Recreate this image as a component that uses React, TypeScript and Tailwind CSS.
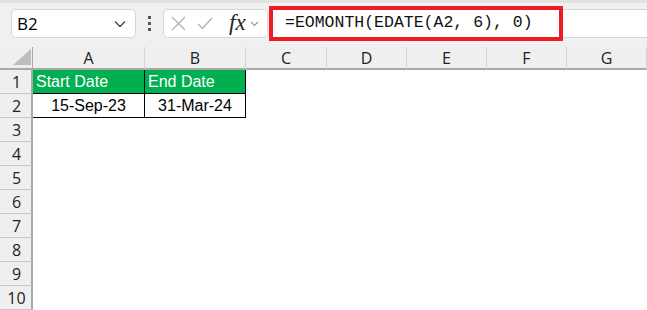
import React from 'react';

const COLS = ['A', 'B', 'C', 'D', 'E', 'F', 'G'];
const WIDTHS = [112, 101, 81, 80, 80, 80, 80];
const ROWS = [1, 2, 3, 4, 5, 6, 7, 8, 9, 10];

const ui = { fontFamily: '"Open Sans", "Noto Sans", sans-serif' };
const cellFont = { fontFamily: '"Liberation Sans", Arial, sans-serif' };

function Toolbar() {
  return (
    <div className="relative h-[47px] bg-[#f0f0f0] border-t-[3px] border-[#e2e2e2] flex items-start pt-[6px]">
      {/* name box */}
      <div
        className="ml-[11px] w-[125px] h-[29px] bg-white border border-[#d6d6d6] rounded-[5px] flex items-center justify-between pl-[5px] pr-[9px] text-[17px] text-black"
        style={ui}
      >
        <span>B2</span>
        <svg width="12" height="8" viewBox="0 0 12 8">
          <path d="M1 1.5 L6 6.5 L11 1.5" fill="none" stroke="#444" strokeWidth="1.3" />
        </svg>
      </div>
      {/* dots */}
      <div className="w-[27px] h-[29px] flex flex-col items-center justify-center gap-[3px]">
        <div className="w-[3px] h-[3px] bg-[#555]" />
        <div className="w-[3px] h-[3px] bg-[#555]" />
        <div className="w-[3px] h-[3px] bg-[#555]" />
      </div>
      {/* fx box */}
      <div className="w-[105px] h-[29px] bg-white border border-[#d6d6d6] rounded-[5px] flex items-center pl-[7px] gap-[11px]">
        <svg width="15" height="15" viewBox="0 0 15 15">
          <path d="M1 1 L14 14 M14 1 L1 14" stroke="#b4b4b4" strokeWidth="1.4" />
        </svg>
        <svg width="16" height="13" viewBox="0 0 16 13">
          <path d="M1 7 L5.5 11.5 L15 1" fill="none" stroke="#b4b4b4" strokeWidth="1.4" />
        </svg>
        <span
          className="italic text-[23px] leading-none text-[#222] ml-[5px] -mt-[2px]"
          style={{ fontFamily: '"Liberation Serif", "Times New Roman", serif' }}
        >
          fx
        </span>
        <svg width="9" height="6" viewBox="0 0 9 6" className="-ml-[7px]">
          <path d="M1 1 L4.5 4.5 L8 1" fill="none" stroke="#999" strokeWidth="1.1" />
        </svg>
      </div>
      {/* formula bar */}
      <div className="flex-1 h-[29px] bg-white border-y border-[#d6d6d6] ml-[1px] flex items-center pl-[16px]">
        <span
          className="text-[16.5px] text-[#111]"
          style={{ fontFamily: '"Liberation Mono", "DejaVu Sans Mono", monospace' }}
        >
          =EOMONTH(EDATE(A2, 6), 0)
        </span>
      </div>
      {/* highlight annotation */}
      <div className="absolute left-[269px] top-[3px] w-[294px] h-[35px] border-4 border-[#ed1c24]" />
    </div>
  );
}

function Sheet() {
  const hdr = 'bg-[#efefef] text-[#222] text-[16px] flex items-center justify-center';
  return (
    <div
      className="grid"
      style={{ gridTemplateColumns: `33px ${WIDTHS.map((w) => w + 'px').join(' ')}`, gridTemplateRows: '23px repeat(10, 24px)', ...ui }}
    >
      {/* corner */}
      <div className="bg-[#efefef] border-b-2 border-r border-[#a8a8a8] relative">
        <svg width="20" height="17" viewBox="0 0 20 17" className="absolute right-0 bottom-[2px]">
          <path d="M19 0 L19 16 L1 16 Z" fill="#bdbdbd" />
        </svg>
      </div>
      {COLS.map((c) => (
        <div key={c} className={`${hdr} border-b-2 border-[#a8a8a8] border-r border-r-[#d4d4d4] pt-[1px]`}>
          {c}
        </div>
      ))}
      {ROWS.map((r) => (
        <React.Fragment key={r}>
          <div className={`${hdr} border-r-2 border-[#a8a8a8] border-b border-b-[#c8c8c8] pl-[2px]`}>{r}</div>
          {COLS.map((c, i) => {
            if (r === 1 && i < 2) {
              return (
                <div
                  key={c}
                  className="bg-[#00b050] text-white text-[16px] flex items-center pl-[3px] border-b border-r border-black"
                  style={cellFont}
                >
                  {i === 0 ? 'Start Date' : 'End Date'}
                </div>
              );
            }
            if (r === 2 && i < 2) {
              return (
                <div
                  key={c}
                  className="bg-white text-black text-[16px] flex items-center justify-center border-b border-r border-black"
                  style={cellFont}
                >
                  {i === 0 ? '15-Sep-23' : '31-Mar-24'}
                </div>
              );
            }
            return <div key={c} className="bg-white" />;
          })}
        </React.Fragment>
      ))}
    </div>
  );
}

export default function App() {
  return (
    <div className="w-[647px] h-[310px] overflow-hidden bg-white">
      <Toolbar />
      <Sheet />
    </div>
  );
}
